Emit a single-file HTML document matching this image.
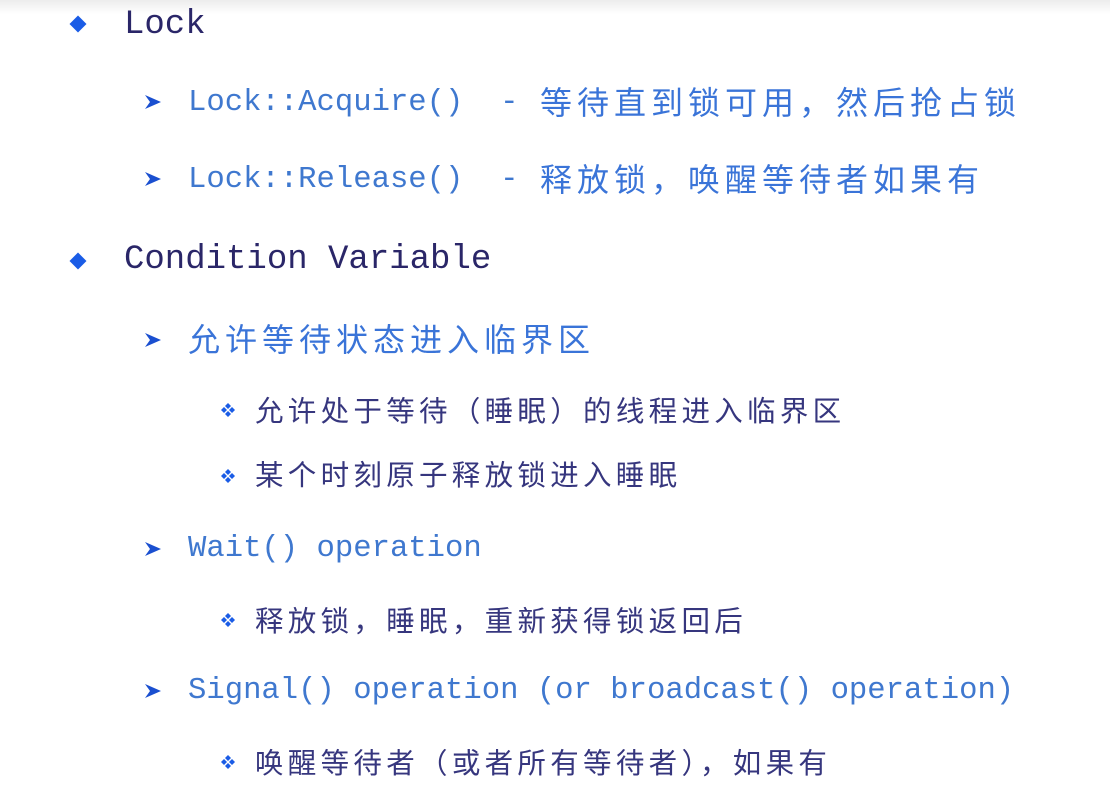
<!DOCTYPE html>
<html><head><meta charset="utf-8"><style>
body{margin:0;width:1110px;height:811px;background:#fff;position:relative;overflow:hidden}
.top{position:absolute;left:0;top:0;width:1110px;height:14px;background:linear-gradient(#ececec,#fff)}
.t{position:absolute;white-space:pre;line-height:1}
.m1{font-family:"Liberation Mono",monospace;font-size:34px;color:#2a2668}
.m2{font-family:"Liberation Mono",monospace;font-size:30.6px;color:#3f78cf}
.c2{font-family:"Liberation Sans","Noto Sans CJK SC",sans-serif;font-size:32px;letter-spacing:5px;color:#3a74d8}
.c3{font-family:"Liberation Sans","Noto Sans CJK SC",sans-serif;font-size:28.5px;letter-spacing:4.3px;color:#36367e}
.p{font-family:"Noto Sans CJK SC",sans-serif}
.d{position:absolute;width:12px;height:12px;background:#1a5ce6;transform:rotate(45deg)}
.a{position:absolute}
</style></head><body>
<div class="top"></div>

<div class="d" style="left:72px;top:18px"></div>
<div class="t m1" style="left:124px;top:8px">Lock</div>

<svg class="a" style="left:144px;top:93px" width="18" height="18" viewBox="0 0 18 18"><path d="M1 2 L17 9 L1 16 L6 9 Z" fill="#1a4fd0"/></svg>
<div class="t m2" style="left:188px;top:88px">Lock::Acquire()  -</div>
<div class="t c2" style="left:540px;top:85px">等待直到锁可用<span class="p">，</span>然后抢占锁</div>

<svg class="a" style="left:144px;top:170px" width="18" height="18" viewBox="0 0 18 18"><path d="M1 2 L17 9 L1 16 L6 9 Z" fill="#1a4fd0"/></svg>
<div class="t m2" style="left:188px;top:165px">Lock::Release()  -</div>
<div class="t c2" style="left:540px;top:162px">释放锁<span class="p">，</span>唤醒等待者如果有</div>

<div class="d" style="left:72px;top:255px"></div>
<div class="t m1" style="left:124px;top:243px">Condition Variable</div>

<svg class="a" style="left:144px;top:331px" width="18" height="18" viewBox="0 0 18 18"><path d="M1 2 L17 9 L1 16 L6 9 Z" fill="#1a4fd0"/></svg>
<div class="t c2" style="left:188px;top:324px">允许等待状态进入临界区</div>

<svg class="a" style="left:220px;top:402px" width="16" height="16" viewBox="0 0 16 16"><g fill="#1a5ce6"><path d="M8 1l3 3-3 3-3-3z"/><path d="M8 9l3 3-3 3-3-3z"/><path d="M1 8l3-3 3 3-3 3z"/><path d="M9 8l3-3 3 3-3 3z"/></g></svg>
<div class="t c3" style="left:255px;top:396px">允许处于等待<span class="p">（</span>睡眠<span class="p">）</span>的线程进入临界区</div>

<svg class="a" style="left:220px;top:468px" width="16" height="16" viewBox="0 0 16 16"><g fill="#1a5ce6"><path d="M8 1l3 3-3 3-3-3z"/><path d="M8 9l3 3-3 3-3-3z"/><path d="M1 8l3-3 3 3-3 3z"/><path d="M9 8l3-3 3 3-3 3z"/></g></svg>
<div class="t c3" style="left:255px;top:462px">某个时刻原子释放锁进入睡眠</div>

<svg class="a" style="left:144px;top:540px" width="18" height="18" viewBox="0 0 18 18"><path d="M1 2 L17 9 L1 16 L6 9 Z" fill="#1a4fd0"/></svg>
<div class="t m2" style="left:188px;top:534px">Wait() operation</div>

<svg class="a" style="left:220px;top:612px" width="16" height="16" viewBox="0 0 16 16"><g fill="#1a5ce6"><path d="M8 1l3 3-3 3-3-3z"/><path d="M8 9l3 3-3 3-3-3z"/><path d="M1 8l3-3 3 3-3 3z"/><path d="M9 8l3-3 3 3-3 3z"/></g></svg>
<div class="t c3" style="left:255px;top:606px">释放锁<span class="p">，</span>睡眠<span class="p">，</span>重新获得锁返回后</div>

<svg class="a" style="left:144px;top:682px" width="18" height="18" viewBox="0 0 18 18"><path d="M1 2 L17 9 L1 16 L6 9 Z" fill="#1a4fd0"/></svg>
<div class="t m2" style="left:188px;top:676px">Signal() operation (or broadcast() operation)</div>

<svg class="a" style="left:220px;top:754px" width="16" height="16" viewBox="0 0 16 16"><g fill="#1a5ce6"><path d="M8 1l3 3-3 3-3-3z"/><path d="M8 9l3 3-3 3-3-3z"/><path d="M1 8l3-3 3 3-3 3z"/><path d="M9 8l3-3 3 3-3 3z"/></g></svg>
<div class="t c3" style="left:255px;top:748px">唤醒等待者<span class="p">（</span>或者所有等待者<span class="p">），</span>如果有</div>
</body></html>
